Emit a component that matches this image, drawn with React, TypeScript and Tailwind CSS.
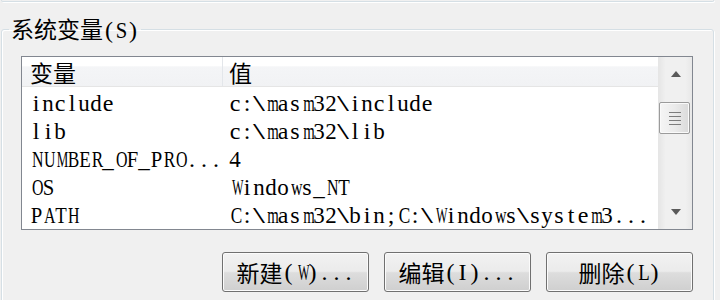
import React from "react";

const C = ({ children }: { children: React.ReactNode }) => (
  <span className="font-['Noto_Sans_CJK_SC',sans-serif] text-[23px] leading-[28px]">
    {children}
  </span>
);

// Times / Liberation Serif advance widths (per 1000 em)
const W: Record<string, number> = {
  a: 444, b: 500, c: 444, d: 500, e: 444, f: 333, g: 500, h: 500, i: 278, j: 278, k: 500, l: 278, m: 778,
  n: 500, o: 500, p: 500, q: 500, r: 333, s: 389, t: 278, u: 500, v: 500, w: 722, x: 500, y: 500, z: 444,
  A: 722, B: 667, C: 667, D: 722, E: 611, F: 556, G: 722, H: 722, I: 333, J: 389, K: 722, L: 611, M: 889,
  N: 722, O: 722, P: 556, Q: 722, R: 667, S: 556, T: 611, U: 722, V: 722, W: 944, X: 722, Y: 722, Z: 611,
  "_": 500, "(": 333, ")": 333, ".": 250, ":": 278, ";": 278,
};
const FS = 24;

function scaleFor(ch: string): number {
  if (ch === "\\") return 1.8;
  const w = ((W[ch] ?? 500) * FS) / 1000;
  return Math.min(1, 11.5 / w);
}

const M = ({ t }: { t: string }) => (
  <span className="font-['Liberation_Serif',serif] text-[24px] leading-[28px]">
    {[...t].map((ch, i) => (
      <span
        key={i}
        className="inline-block w-[12px] text-center"
        style={{ transform: `scaleX(${scaleFor(ch)})` }}
      >
        {ch}
      </span>
    ))}
  </span>
);

const rows: [string, string][] = [
  ["include", "c:\\masm32\\include"],
  ["lib", "c:\\masm32\\lib"],
  ["NUMBER_OF_PRO...", "4"],
  ["OS", "Windows_NT"],
  ["PATH", "C:\\masm32\\bin;C:\\Windows\\system3..."],
];

const Btn = ({ children }: { children: React.ReactNode }) => (
  <button className="w-[147px] h-[40px] rounded-[3px] border border-[#707070] bg-[linear-gradient(#f2f2f2_0%,#ebebeb_48%,#dddddd_52%,#cfcfcf_100%)] shadow-[inset_0_0_0_1px_#fbfbfb] flex items-center justify-center text-black whitespace-pre">
    {children}
  </button>
);

export default function App() {
  return (
    <div className="w-[720px] h-[300px] overflow-hidden bg-[#f0f0f0] text-black font-['Liberation_Serif','Noto_Sans_CJK_SC',serif] text-[22px] leading-[28px]">
      <div className="ml-[1px] w-[713px] h-[2px] border-x border-b border-[#d5dfe5] rounded-b-[3px] shadow-[1px_1px_0_#ffffff]" />
      <fieldset className="ml-[1px] mt-[12px] w-[713px] h-[320px] border border-[#d5dfe5] rounded-[3px] shadow-[1px_1px_0_#ffffff,inset_1px_1px_0_#ffffff]">
        <legend className="ml-[7px] px-[2px] leading-[28px]">
          <C>系统变量</C>
          <M t="(S)" />
        </legend>
        <div className="ml-[19px] mt-[11px] w-[672px] h-[174px] border border-[#828790] bg-white flex overflow-hidden">
          <div className="flex-1 flex flex-col">
            <div className="h-[32px] flex border-b border-[#e5e5e5] bg-[linear-gradient(#ffffff_0%,#ffffff_30%,#f4f5f7_34%,#f1f2f4_100%)]">
              <div className="w-[201px] pl-[8px] border-r border-[#e3e6ea] flex items-center">
                <C>变量</C>
              </div>
              <div className="flex-1 pl-[6px] flex items-center">
                <C>值</C>
              </div>
            </div>
            <div className="pt-[2px]">
              {rows.map(([k, v]) => (
                <div key={k} className="h-[28px] flex items-center whitespace-nowrap">
                  <div className="w-[201px] pl-[8px]">
                    <M t={k} />
                  </div>
                  <div className="flex-1 pl-[6px]">
                    <M t={v} />
                  </div>
                </div>
              ))}
            </div>
          </div>
          <div className="w-[34px] flex flex-col bg-[linear-gradient(90deg,#e6e6e6_0%,#f0f0f0_20%,#f0f0f0_80%,#e8e8e8_100%)] border-l border-[#e6e6e6]">
            <div className="h-[34px] flex items-center justify-center">
              <svg width="10" height="6" viewBox="0 0 10 6">
                <path d="M5 0 L10 6 L0 6 Z" fill="#5a5a5a" />
              </svg>
            </div>
            <div className="mt-[11px] w-[31px] h-[32px] rounded-[2px] border border-[#9b9b9b] bg-[linear-gradient(90deg,#f5f5f5_0%,#ebebeb_50%,#dadada_100%)] shadow-[inset_0_0_0_1px_#fafafa] flex flex-col items-center justify-center gap-[3px]">
              <div className="w-[12px] h-[1px] bg-[#7d7d7d]" />
              <div className="w-[12px] h-[1px] bg-[#7d7d7d]" />
              <div className="w-[12px] h-[1px] bg-[#7d7d7d]" />
              <div className="w-[12px] h-[1px] bg-[#7d7d7d]" />
            </div>
            <div className="flex-1" />
            <div className="h-[34px] flex items-center justify-center">
              <svg width="10" height="6" viewBox="0 0 10 6">
                <path d="M0 0 L10 0 L5 6 Z" fill="#5a5a5a" />
              </svg>
            </div>
          </div>
        </div>
        <div className="mt-[22px] ml-[19px] w-[672px] flex justify-end gap-[15px]">
          <Btn>
            <C>新建</C>
            <M t="(W)..." />
          </Btn>
          <Btn>
            <C>编辑</C>
            <M t="(I)..." />
          </Btn>
          <Btn>
            <C>删除</C>
            <M t="(L)" />
          </Btn>
        </div>
      </fieldset>
    </div>
  );
}
